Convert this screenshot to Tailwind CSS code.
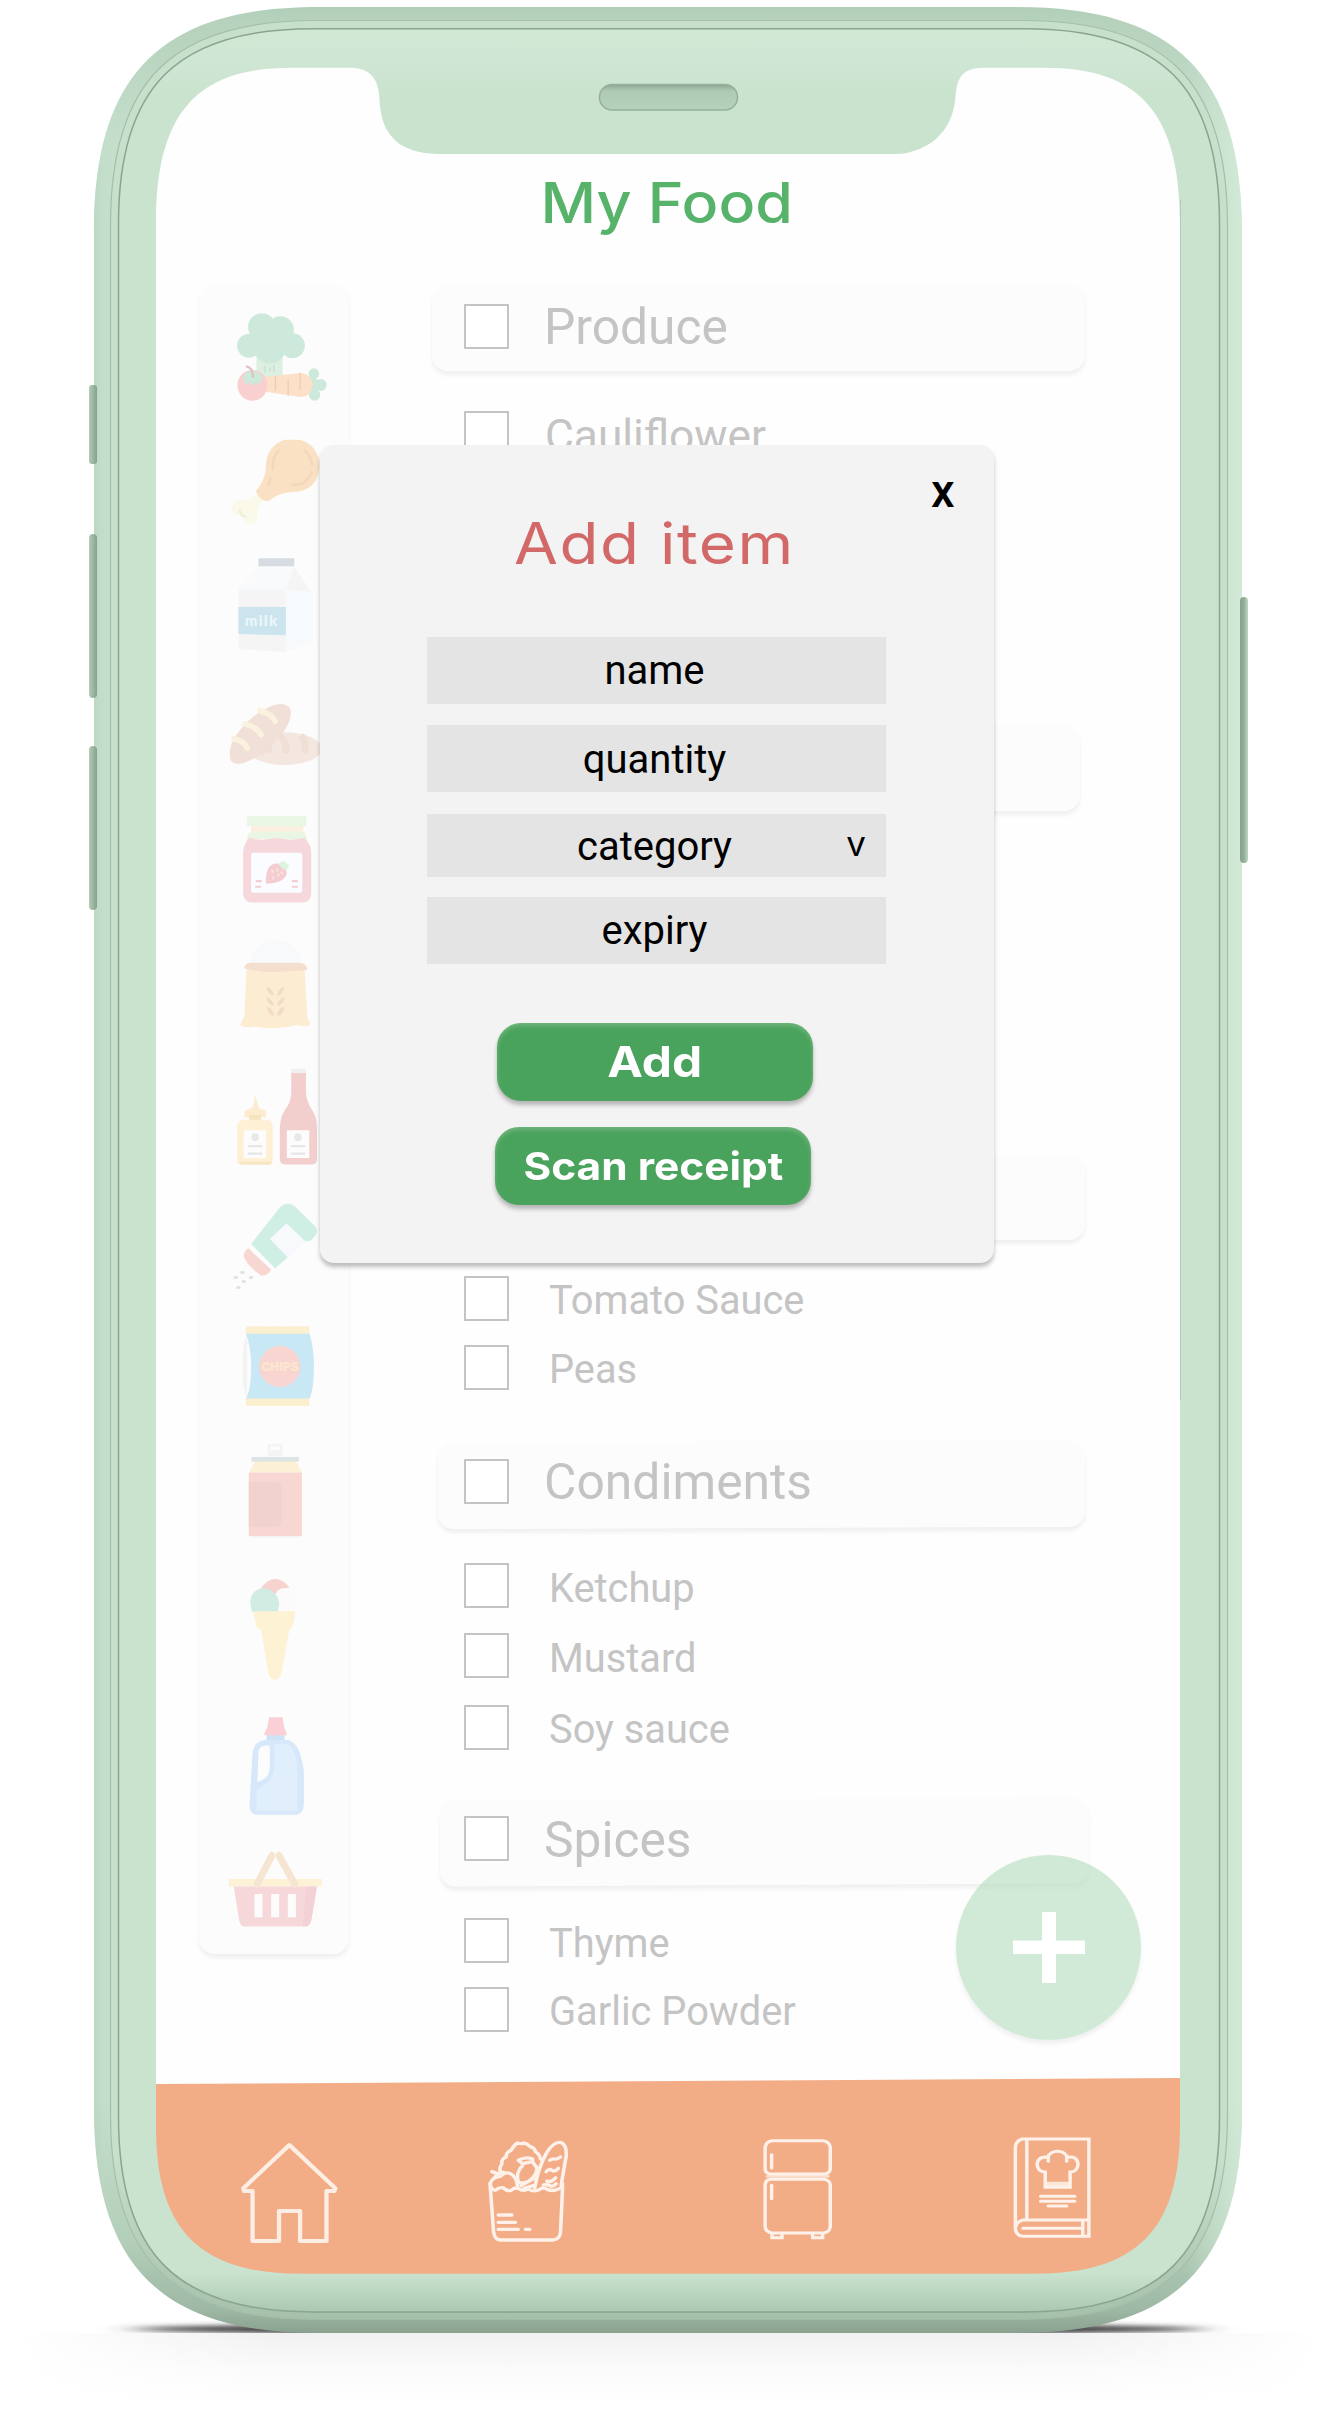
<!DOCTYPE html>
<html lang="en">
<head>
<meta charset="utf-8">
<title>My Food</title>
<script src="https://cdn.jsdelivr.net/npm/@tailwindcss/browser@4"></script>
</head>
<body class="bg-white">
<main class="relative h-[2423px] w-[1339px] overflow-hidden bg-white pt-[68px] pl-[156px] font-['Roboto',sans-serif]">

  <!-- floor shadow and side buttons -->
  <svg class="absolute inset-0" width="1339" height="2423" viewBox="0 0 1339 2423">
    <defs>
      <filter id="soft" x="-10%" y="-300%" width="120%" height="700%"><feGaussianBlur stdDeviation="18 2.5"/></filter>
      <linearGradient id="floor" x1="0" y1="0" x2="0" y2="1"><stop offset="0" stop-color="#f1f1f1"/><stop offset=".5" stop-color="#fafafa"/><stop offset="1" stop-color="#ffffff"/></linearGradient>
      <linearGradient id="fade" x1="0" y1="0" x2="1" y2="0"><stop offset="0" stop-color="#fff"/><stop offset=".2" stop-color="#fff" stop-opacity="0"/><stop offset=".8" stop-color="#fff" stop-opacity="0"/><stop offset="1" stop-color="#fff"/></linearGradient>
      <linearGradient id="keyL" x1="0" y1="0" x2="1" y2="0"><stop offset="0" stop-color="#b0ccb6"/><stop offset="1" stop-color="#86a08c"/></linearGradient>
      <linearGradient id="keyR" x1="0" y1="0" x2="1" y2="0"><stop offset="0" stop-color="#86a08c"/><stop offset=".5" stop-color="#93ad99"/><stop offset="1" stop-color="#bcd8c2"/></linearGradient>
      <clipPath id="above"><rect x="0" y="2290" width="1339" height="43"/></clipPath>
    </defs>
    <rect x="20" y="2333" width="1300" height="70" fill="url(#floor)"/>
    <rect x="20" y="2333" width="1300" height="70" fill="url(#fade)"/>
    <g clip-path="url(#above)"><ellipse cx="668" cy="2329" rx="535" ry="6" fill="#3c3c3c" filter="url(#soft)"/></g>
  </svg>

  <div class="relative flex h-[2206px] w-[1024px] flex-col bg-[#fefefe]">
    <h1 class="h-[216px] w-[640px] origin-left scale-x-[1.089] pt-[101px] pl-[353px] font-['Inter',sans-serif] text-[56px] leading-[68px] font-medium whitespace-nowrap text-[#57b26a]">My Food</h1>

    <div class="flex h-[1794px]">
      <!-- food categories -->
      <nav class="ml-[43px] flex h-[1670px] w-[150px] flex-col rounded-[16px] bg-[#fcfcfc] shadow-[0_4px_4px_rgba(0,0,0,0.06)]">
        <svg class="h-[135.7px] w-[150px] shrink-0" viewBox="28 13 449 407" preserveAspectRatio="none">
          <path d="M200 215h78v78h-78z" fill="#dcefe0"/><path d="M226 258v22M240 262v14M252 256v22" stroke="#c4e2cf" stroke-width="4" fill="none"/>
          <g fill="#cce9db"><circle cx="216" cy="142" r="41"/><circle cx="272" cy="150" r="40"/><circle cx="178" cy="198" r="36"/><circle cx="308" cy="198" r="37"/><ellipse cx="240" cy="208" rx="46" ry="43"/><circle cx="372" cy="282" r="16"/><circle cx="392" cy="316" r="18"/><circle cx="374" cy="346" r="17"/><path d="M355 290l40 15v22l-36 14z"/></g>
          <path d="M225 292L330 280Q366 282 368 316Q364 352 332 352L225 336z" fill="#fde0c8"/>
          <path d="M257 288v46M295 300v48M331 280v50" stroke="#f1cdb0" stroke-width="4" fill="none"/>
          <ellipse cx="188" cy="317" rx="45" ry="46" fill="#f9cfcf"/>
          <path d="M159 290Q186 256 218 290L209 316L198 308L188 320L178 308L166 316z" fill="#cce9db"/>
          <path d="M168 260q22 2 22 34" stroke="#e0c4c4" stroke-width="7" fill="none"/>
        </svg>
        <svg class="h-[123.3px] w-[150px] shrink-0" viewBox="28 420 449 370" preserveAspectRatio="none">
          <path d="M196 644Q220 650 216 672Q200 680 202 700Q208 728 182 732Q160 732 156 706Q126 706 127 682Q132 656 154 660Q176 664 196 644z" fill="#fbf9e9"/>
          <path d="M150 688q0 22 20 22" stroke="#f0efd8" stroke-width="7" fill="none"/>
          <path d="M284 479h44Q388 494 388 560Q384 632 310 636Q262 638 236 664Q210 664 198 634Q226 600 228 566Q226 500 284 479z" fill="#fbe1c4"/>
          <path d="M266 512q-20 24-17 56M242 592l-6 24M346 512q18 20 20 42M308 614q40 4 56-36" stroke="#f3d8bc" stroke-width="8" fill="none" stroke-linecap="round"/>
        </svg>
        <svg class="h-[136.7px] w-[150px] shrink-0" viewBox="28 790 449 410" preserveAspectRatio="none">
          <path d="M206 860h106L288 932H147z" fill="#f8fafc"/><path d="M312 860L364 938L288 932z" fill="#f5f5f5"/>
          <path d="M147 930h141v188l-141-10z" fill="#f5f5f5"/><path d="M288 930l80 8v150l-80 30z" fill="#f7fafc"/>
          <path d="M206 836h107v24H206z" fill="#d6dce1"/><path d="M146 982h142v85l-142-4z" fill="#cbe4ee"/>
          <text x="166" y="1038" font-family="Lato" font-weight="900" font-size="44" fill="#eef7fa" textLength="96">milk</text>
        </svg>
        <svg class="h-[100px] w-[150px] shrink-0" viewBox="28 1200 449 300" preserveAspectRatio="none">
          <ellipse cx="284" cy="1406" rx="112" ry="49" fill="#f4e7df"/>
          <path d="M270 1366q24 22 16 54M334 1366q18 20 10 52M210 1420l26-24v22" stroke="#efdfd5" stroke-width="20" fill="none"/>
          <path d="M122 1440Q108 1380 190 1310Q270 1250 300 1284Q316 1330 240 1400Q150 1476 122 1440z" fill="#f0e0d7"/>
          <path d="M132 1376q30 6 40 28M166 1332q34 8 48 32M210 1292q34 8 46 32" stroke="#faf2df" stroke-width="17" fill="none" stroke-linecap="round"/>
        </svg>
        <svg class="h-[140px] w-[150px] shrink-0" viewBox="28 28 449 392" preserveAspectRatio="none">
          <path d="M184 154h156v24H184z" fill="#faf0e2"/><path d="M172 129h177v28H172zM178 174h166l8 20H170z" fill="#e9f6e3"/>
          <path d="M178 190q40 10 82 0q44 10 84 0Q364 210 364 230V346Q362 371 340 371H184Q162 370 160 346V230Q162 206 178 190z" fill="#f6d8dc"/>
          <rect x="184" y="232" width="153" height="112" rx="6" fill="#fafcff"/>
          <path d="M228 318Q226 262 262 262Q292 270 290 292Q280 318 228 318z" fill="#f4cdd2"/><path d="M266 262l16-8 16 14-8 12-14-4z" fill="#def3dc"/>
          <path d="M248 280v8M262 276v8M250 298v8M266 290v8M276 284v8" stroke="#fbe6dc" stroke-width="6"/>
          <path d="M198 311h18M196 327h18M306 311h18M306 327h18" stroke="#f4cdd2" stroke-width="6"/>
        </svg>
        <svg class="h-[128.6px] w-[150px] shrink-0" viewBox="28 420 449 360" preserveAspectRatio="none">
          <path d="M180 542Q196 476 258 476Q320 478 338 542z" fill="#f7f9fb"/>
          <path d="M170 556H344L352 692L362 712Q350 722 322 714Q260 730 196 718Q170 724 151 714L164 688z" fill="#fcecd2"/>
          <path d="M164 556Q164 540 186 540H330Q352 542 352 560Q300 564 256 566Q210 566 164 556z" fill="#f4dfcf"/>
          <path d="M230 606q20 8 22 26q-18-2-22-26M230 636q20 6 22 24q-18-2-22-24M230 662q20 6 22 26q-18-2-22-26M284 606q-20 8-22 26q18-2 22-26M284 636q-20 6-22 24q18-2 22-24M284 662q-20 6-22 26q18-2 22-26" fill="#f1dac6"/>
        </svg>
        <svg class="h-[135.7px] w-[150px] shrink-0" viewBox="28 780 449 380" preserveAspectRatio="none">
          <path d="M187 948q8-16 8-40q10 30 12 40l22 8v18H164v-18z" fill="#fcecd0"/><path d="M178 968h36v14h-36z" fill="#f6e4c0"/>
          <path d="M158 981h76q15 4 15 22V1094q0 12-14 12H158q-16 0-16-12V1003q0-18 16-22z" fill="#fdf0d4"/><path d="M146 1098h102l-6 9H152z" fill="#f9e6c4"/>
          <path d="M304 838h44v14h-44z" fill="#f0f0f0"/>
          <path d="M304 850h44v56Q350 930 368 956Q382 976 381 1010V1090q0 16-14 16H284q-14 0-14-16V1010Q270 976 284 956Q304 930 304 906z" fill="#f2cfcd"/>
          <path d="M162 1010h67v78h-67zM291 1010h67v78h-67z" fill="#fcfcfc"/>
          <circle cx="196" cy="1030" r="11" fill="#e8e8e8"/><circle cx="324" cy="1030" r="11" fill="#e8e8e8"/>
          <path d="M174 1055h43M174 1076h43M303 1055h43M303 1076h43" stroke="#e6e6e6" stroke-width="6"/>
        </svg>
        <svg class="h-[121.4px] w-[150px] shrink-0" viewBox="28 1160 449 340" preserveAspectRatio="none">
          <path d="M184 1328L272 1224Q292 1208 314 1222L376 1278Q386 1292 376 1304Q362 1324 348 1320L298 1362L256 1396z" fill="#cfeee4"/>
          <path d="M290 1270L348 1322L294 1366L240 1314z" fill="#f7f9fc"/>
          <path d="M176 1340L244 1400Q234 1418 214 1416Q170 1388 162 1362Q162 1348 176 1340z" fill="#f8d7d3"/>
          <path d="M132 1422h12M152 1408h12M178 1422h12M156 1433h12M140 1450h12" stroke="#dcdfe3" stroke-width="7"/>
        </svg>
        <svg class="h-[120px] w-[150px] shrink-0" viewBox="28 -10 449 285" preserveAspectRatio="none">
          <path d="M172 58Q158 80 158 134Q158 190 172 212z" fill="#f3f3f4"/>
          <path d="M168 56H358Q372 90 372 134Q372 190 358 214H168Q184 190 184 134Q184 90 168 56z" fill="#c9e8f5"/>
          <path d="M168 58V42l6-3 6 3 6-3 6 3 6-3 6 3 6-3 6 3 6-3 6 3 6-3 6 3 6-3 6 3 6-3 6 3 6-3 6 3 6-3 6 3 6-3 6 3 6-3 6 3 6-3 6 3 6-3 6 3 6-3 6 3 6-3 4 3V58zM168 212V230H358V212z" fill="#fcefd0"/>
          <ellipse cx="270" cy="136" rx="62" ry="49" fill="#f8d5d0"/>
          <text x="214" y="146" font-family="Inter" font-weight="900" font-size="27" fill="#fce6cf" textLength="112" lengthAdjust="spacingAndGlyphs">CHIPS</text>
        </svg>
        <svg class="h-[136.8px] w-[150px] shrink-0" viewBox="28 275 449 325" preserveAspectRatio="none">
          <path d="M234 320h44v30h-44z" fill="#f4f4f4"/><path d="M242 326h28v9h-28z" fill="#fcfcfc"/>
          <path d="M196 360H318L336 388H178z" fill="#fcf0d6"/><path d="M185 351h142v11H185z" fill="#dde4e4"/>
          <path d="M177 388H336V539H177z" fill="#f8d7d2"/><path d="M177 410h82q16 2 16 14v78q0 14-16 16h-82z" fill="#f2d2cd"/>
          <path d="M182 539h150v4H182z" fill="#f3f5f5"/>
        </svg>
        <svg class="h-[134.7px] w-[150px] shrink-0" viewBox="28 600 449 320" preserveAspectRatio="none">
          <path d="M212 664Q230 642 256 640Q284 642 299 662Q262 660 258 676z" fill="#f6d3cf"/>
          <path d="M262 672Q290 660 318 668Q326 690 312 718H262z" fill="#fcfafa"/>
          <path d="M188 720Q174 690 190 674Q210 658 236 664Q264 674 268 698L264 720z" fill="#d0ece3"/>
          <path d="M190 717H316Q314 744 306 756L298 762L274 868Q266 880 254 880Q240 878 236 866L214 762Q200 758 198 748z" fill="#fef2d5"/>
        </svg>
        <svg class="h-[138.9px] w-[150px] shrink-0" viewBox="28 920 449 330" preserveAspectRatio="none">
          <path d="M230 1008h54v16h-54z" fill="#cfe3f6"/>
          <path d="M238 968h40l6 28q6 4 7 15H223q1-11 8-15z" fill="#fad0d6"/>
          <path fill-rule="evenodd" d="M226 1022H296Q326 1030 336 1072Q342 1084 342 1110V1176Q340 1198 318 1200H200Q180 1198 179 1178L188 1056Q192 1024 226 1022zM206 1050L203 1122Q240 1114 240 1086V1036Q210 1032 206 1050z" fill="#d6e8fa"/>
          <path d="M254 1032H294Q312 1038 322 1078V1190H200V1142Q254 1118 254 1084z" fill="#e1eefb"/>
        </svg>
        <svg class="h-[117.8px] w-[150px] shrink-0" viewBox="28 1250 449 280" preserveAspectRatio="none">
          <path d="M117 1352H396v18H117z" fill="#fef2d6"/>
          <path d="M132 1370H381L364 1450Q360 1465 348 1465H164Q152 1465 148 1450z" fill="#f6d8db"/><path d="M347 1370h34l-17 80q-4 15-26 15q6-30 9-95z" fill="#f3d2d6"/>
          <path d="M202 1364L246 1297M314 1364L268 1297" stroke="#f7e5d4" stroke-width="20" stroke-linecap="round"/>
          <path d="M194 1388h24v55h-24zM244 1388h24v55h-24zM294 1388h24v55h-24z" fill="#fcfcfc"/>
        </svg>
      </nav>

      <!-- inventory list -->
      <div class="ml-[83px] flex flex-1 flex-col text-[39.8px] leading-[45px] whitespace-nowrap text-[#c4c4c4]">
        <div class="flex h-[87px] w-[653px] shrink-0 gap-[35px] rounded-[16px] bg-[#fcfcfc] pt-[20px] pl-[32px] text-[49.7px] shadow-[0_4px_4px_rgba(0,0,0,0.06)]">
          <span class="size-[45px] border-2 border-[#c4c4c4] bg-white"></span><span class="pt-px">Produce</span>
        </div>
        <div class="mt-[40px] flex h-[45px] shrink-0 gap-[36px] pl-[32px] text-[44.3px]"><span class="size-[45px] border-2 border-[#c4c4c4] bg-white"></span><span class="pt-[3px]">Cauliflower</span></div>
        <div class="mt-[269px] h-[86px] w-[648px] shrink-0 rounded-[16px] bg-[#fcfcfc] shadow-[0_4px_4px_rgba(0,0,0,0.06)]"></div>
        <div class="mt-[343px] h-[86px] w-[653px] shrink-0 rounded-[16px] bg-[#fcfcfc] shadow-[0_4px_4px_rgba(0,0,0,0.06)]"></div>
        <div class="mt-[36px] flex h-[45px] shrink-0 gap-[40px] pl-[32px]"><span class="size-[45px] border-2 border-[#c4c4c4] bg-white"></span><span class="pt-[2px]">Tomato Sauce</span></div>
        <div class="mt-[24px] flex h-[45px] shrink-0 gap-[40px] pl-[32px]"><span class="size-[45px] border-2 border-[#c4c4c4] bg-white"></span><span class="pt-[2px]">Peas</span></div>
        <div class="relative mt-[51px] ml-[6px] flex h-[87px] w-[647px] shrink-0 gap-[35px] pt-[18px] pl-[26px] text-[49.8px]">
          <div class="absolute inset-0 -skew-y-[0.2deg] rounded-[16px] bg-[#fcfcfc] shadow-[0_4px_4px_rgba(0,0,0,0.06)]"></div>
          <span class="relative size-[45px] border-2 border-[#c4c4c4] bg-white"></span><span class="relative pt-px">Condiments</span>
        </div>
        <div class="mt-[35px] flex h-[45px] shrink-0 gap-[40px] pl-[32px]"><span class="size-[45px] border-2 border-[#c4c4c4] bg-white"></span><span class="pt-[3px]">Ketchup</span></div>
        <div class="mt-[25px] flex h-[45px] shrink-0 gap-[40px] pl-[32px]"><span class="size-[45px] border-2 border-[#c4c4c4] bg-white"></span><span class="pt-[3px]">Mustard</span></div>
        <div class="mt-[27px] flex h-[45px] shrink-0 gap-[40px] pl-[32px]"><span class="size-[45px] border-2 border-[#c4c4c4] bg-white"></span><span class="pt-[2px]">Soy sauce</span></div>
        <div class="relative mt-[49px] ml-[8px] flex h-[86px] w-[649px] shrink-0 gap-[35px] pt-[17px] pl-[24px] text-[49.7px]">
          <div class="absolute inset-0 -skew-y-[0.28deg] rounded-[16px] bg-[#fcfcfc] shadow-[0_4px_4px_rgba(0,0,0,0.06)]"></div>
          <span class="relative size-[45px] border-2 border-[#c4c4c4] bg-white"></span><span class="relative pt-[2px]">Spices</span>
        </div>
        <div class="mt-[33px] flex h-[45px] shrink-0 gap-[40px] pl-[32px]"><span class="size-[45px] border-2 border-[#c4c4c4] bg-white"></span><span class="pt-[3px]">Thyme</span></div>
        <div class="mt-[24px] flex h-[45px] shrink-0 gap-[40px] pl-[32px]"><span class="size-[45px] border-2 border-[#c4c4c4] bg-white"></span><span class="pt-[2px]">Garlic Powder</span></div>
      </div>
    </div>

    <!-- bottom navigation -->
    <nav class="flex h-[196px] items-start bg-[#f3ad86] pt-[56px] [clip-path:polygon(0_6px,100%_0,100%_100%,0_100%)]">
      <svg class="mt-[6px] ml-[83px] h-[106px] w-[100px]" viewBox="276 269 280 318" preserveAspectRatio="none" fill="none" stroke="#fdeee5" stroke-width="12" stroke-linejoin="round">
        <path d="M417 284L546 414L543 422H521V572H447V482H388V572H314V422H290L288 414z"/>
      </svg>
      <svg class="mt-[3px] ml-[146px] h-[106px] w-[88px]" viewBox="969 260 246 318" preserveAspectRatio="none" fill="none" stroke="#fdf1ea" stroke-width="10" stroke-linejoin="round" stroke-linecap="round">
        <path d="M983 400L993 545Q996 568 1012 569H1160Q1178 566 1180 546L1186 410"/>
        <path d="M984 400Q984 416 998 420Q1008 410 1020 412Q1030 424 1042 420Q1052 410 1062 414Q1076 424 1090 416Q1104 426 1120 418Q1132 408 1144 418Q1160 424 1174 416Q1186 412 1186 400"/>
        <path d="M984 398Q990 380 1012 378Q1030 358 1048 376Q1060 390 1060 414M988 364L1004 370L996 382M1004 372L1020 366"/>
        <path d="M1012 366Q1008 350 1016 342Q1014 326 1028 320Q1028 304 1042 300Q1050 284 1060 278Q1070 282 1078 278Q1088 280 1094 288Q1108 292 1110 304Q1122 312 1124 326"/>
        <path d="M1074 346Q1054 366 1062 396Q1090 404 1108 374Q1120 352 1108 344L1102 334L1074 340L1062 330Q1084 318 1102 326V336M1070 406L1106 384M1078 414L1104 406"/>
        <path d="M1108 412Q1118 350 1142 306Q1160 274 1180 276Q1198 282 1196 316L1182 404M1132 404q10-4 18 2t18-6M1142 392q8 4 16-2t8-8M1140 364q8-10 16-4t18-6M1150 330q8-6 14-4t16-6"/>
        <path d="M1006 494H1044M1006 516H1054M1006 537H1062M1082 537H1094"/>
      </svg>
      <svg class="mt-[2px] ml-[186px] h-[106px] w-[77px]" viewBox="150 258 201 318" preserveAspectRatio="none" fill="none" stroke="#fdf1ea" stroke-width="9" stroke-linecap="round">
        <path d="M184 272H318Q335 276 336 292V358Q334 370 322 372H180Q167 370 166 358V292Q167 276 184 272z"/>
        <path d="M172 379H330" stroke-opacity=".7"/>
        <path d="M180 388H322Q335 392 336 404V530Q334 548 318 549H184Q167 546 166 530V404Q167 390 180 388z"/>
        <path d="M183 314V354M183 406V446M184 552V563H210V552M290 552V563H316V552"/>
      </svg>
      <svg class="mt-px ml-[174px] h-[106px] w-[85px]" viewBox="808 255 222 318" preserveAspectRatio="none" fill="none" stroke="#fdf1ea" stroke-width="9" stroke-linecap="round">
        <path d="M1014 267H840Q823 272 822 292V538Q826 558 842 559H1014zM852 267V508M1014 510H842Q826 514 823 530M842 535H994M998 514V555" />
        <path d="M900 412V366Q878 364 879 340Q884 318 906 322Q914 304 932 304Q950 304 958 322Q982 316 986 342Q984 366 965 366V412zM908 324V334M956 324V334" />
        <path d="M902 404H964" stroke-width="18" stroke-linecap="butt" stroke-opacity=".85"/>
        <path d="M888 439H977M888 454H977M908 468H956"/>
      </svg>
    </nav>

    <!-- floating add button -->
    <button class="absolute top-[1787px] left-[800px] flex size-[185px] items-center justify-center rounded-full bg-[#b3dabc]/60 shadow-[0_4px_4px_rgba(0,0,0,0.06)]">
      <svg width="72" height="71" viewBox="0 0 72 71"><path d="M29 0h14v28.500h29v13.500H43v29H29V42H0V28.500h29z" fill="#fff"/></svg>
    </button>

    <!-- add item dialog -->
    <section class="absolute top-[377px] left-[164px] flex h-[818px] w-[674px] flex-col rounded-[14px] bg-[#f3f3f3] text-black shadow-[0_4px_4px_rgba(0,0,0,0.25)]">
      <button class="absolute top-[16px] left-[611px] text-[47px] leading-[60px] font-medium">x</button>
      <h2 class="ml-[194px] w-[300px] origin-left scale-x-[1.117] pt-[64px] font-['Inter',sans-serif] text-[57px] leading-[70px] tracking-[1.4px] whitespace-nowrap text-[#d26868]">Add item</h2>
      <div class="mt-[58px] ml-[107px] flex w-[459px] flex-col text-center text-[40px]">
        <div class="h-[67px] bg-[#e4e4e4] pr-[4px] leading-[67px]">name</div>
        <div class="mt-[21px] h-[67px] bg-[#e4e4e4] pr-[4px] leading-[69px]">quantity</div>
        <div class="relative mt-[22px] h-[63px] bg-[#e4e4e4] pr-[4px] leading-[66px]">category<span class="absolute top-0 right-[20px] font-['Inter',sans-serif] text-[35px] leading-[58px]">v</span></div>
        <div class="mt-[20px] h-[67px] bg-[#e4e4e4] pr-[4px] leading-[67px]">expiry</div>
      </div>
      <button class="mt-[59px] ml-[177px] h-[78px] w-[316px] rounded-[24px] bg-[#4aa35c] font-['Inter',sans-serif] text-[42px] leading-[78px] font-bold text-white shadow-[0_4px_4px_rgba(0,0,0,0.25),inset_0_3px_4px_rgba(255,255,255,0.2)]"><span class="inline-block scale-x-[1.14]">Add</span></button>
      <button class="mt-[26px] ml-[175px] h-[78px] w-[316px] rounded-[24px] bg-[#4aa35c] font-['Inter',sans-serif] text-[38px] leading-[75px] font-bold whitespace-nowrap text-white shadow-[0_4px_4px_rgba(0,0,0,0.25),inset_0_3px_4px_rgba(255,255,255,0.2)]"><span class="inline-block scale-x-[1.117]">Scan receipt</span></button>
    </section>
  </div>

  <!-- device frame, with the screen cut out -->
  <svg class="pointer-events-none absolute inset-0" width="1339" height="2423" viewBox="0 0 1339 2423">
    <defs>
      <linearGradient id="rimV" gradientUnits="userSpaceOnUse" x1="0" y1="7" x2="0" y2="2333">
        <stop offset="0" stop-color="#b0ceb8"/><stop offset=".006" stop-color="#b6d2bd"/><stop offset=".06" stop-color="#c4dfcb"/><stop offset=".9" stop-color="#c4dfcb"/><stop offset=".96" stop-color="#b3ceb9"/><stop offset=".99" stop-color="#9db8a4"/><stop offset="1" stop-color="#8aa18f"/>
      </linearGradient>
      <linearGradient id="rimH" gradientUnits="userSpaceOnUse" x1="94" y1="0" x2="1242" y2="0">
        <stop offset="0" stop-color="#b4d0bb" stop-opacity=".5"/><stop offset=".014" stop-color="#c4dfcb" stop-opacity="0"/><stop offset=".95" stop-color="#d0e7d5" stop-opacity="0"/><stop offset="1" stop-color="#d4ebd9" stop-opacity=".8"/>
      </linearGradient>
      <linearGradient id="face" gradientUnits="userSpaceOnUse" x1="0" y1="28" x2="0" y2="2312">
        <stop offset="0" stop-color="#d1e8d5"/><stop offset=".015" stop-color="#cfe6d4"/><stop offset=".03" stop-color="#c9e3ce"/><stop offset=".983" stop-color="#c9e3ce"/><stop offset="1" stop-color="#abc8b1"/>
      </linearGradient>
      <linearGradient id="ring" gradientUnits="userSpaceOnUse" x1="0" y1="20" x2="0" y2="2319">
        <stop offset="0" stop-color="#c7e0cc"/><stop offset=".93" stop-color="#c7e0cc"/><stop offset="1" stop-color="#a5c0ab"/>
      </linearGradient>
      <linearGradient id="slot" x1="0" y1="0" x2="0" y2="1"><stop offset="0" stop-color="#8ba692"/><stop offset=".25" stop-color="#aecab5"/><stop offset="1" stop-color="#b5d2bc"/></linearGradient>
    </defs>
    <path fill="url(#rimV)" fill-rule="evenodd" d="M319 7H1017C1175 7 1242 74 1242 232V2108C1242 2266 1175 2333 1017 2333H319C161 2333 94 2266 94 2108V232C94 74 161 7 319 7ZM313.500 28.700C176.500 28.700 118.500 86.700 118.500 223.700V2117C118.500 2254 176.500 2312 313.500 2312H1024.500C1161.500 2312 1219.500 2254 1219.500 2117V223.700C1219.500 86.700 1161.500 28.700 1024.500 28.700Z"/>
    <path fill="url(#rimH)" fill-rule="evenodd" d="M319 7H1017C1175 7 1242 74 1242 232V2108C1242 2266 1175 2333 1017 2333H319C161 2333 94 2266 94 2108V232C94 74 161 7 319 7ZM313.500 28.700C176.500 28.700 118.500 86.700 118.500 223.700V2117C118.500 2254 176.500 2312 313.500 2312H1024.500C1161.500 2312 1219.500 2254 1219.500 2117V223.700C1219.500 86.700 1161.500 28.700 1024.500 28.700Z"/>
    <path fill="none" stroke="url(#ring)" stroke-width="8" d="M314 24.600H1023.500C1164 24.600 1223.500 84 1223.500 224.600V2115.500C1223.500 2256 1164 2315.500 1023.500 2315.500H314C174 2315.500 114.200 2256 114.200 2115.500V224.600C114.200 84 174 24.600 314 24.600Z"/>
    <path fill="none" stroke="#a3bfaa" stroke-width="1.200" d="M315 20.500H1022.500C1166.500 20.500 1227.500 81.500 1227.500 225.500V2114C1227.500 2258 1166.500 2319 1022.500 2319H315C171 2319 110.500 2258 110.500 2114V225.500C110.500 81.500 171 20.500 315 20.500Z"/>
    <path fill="url(#face)" fill-rule="evenodd" d="M313.500 28.700H1024.500C1161.500 28.700 1219.500 86.700 1219.500 223.700V2117C1219.500 2254 1161.500 2312 1024.500 2312H313.500C176.500 2312 118.500 2254 118.500 2117V223.700C118.500 86.700 176.500 28.700 313.500 28.700ZM291 67.700C196 67.700 156 114 156 223V2127C156 2230 200 2273.700 301 2273.700H1035C1136 2273.700 1180 2230 1180 2127V223C1180 114 1140 67.700 1045 67.700H982C972 67.700 964 71 960 78C956 85 956 92 955 102C953 115 948 128 936 139C928 146 912 154 896 154H440C422 154 406 150 396 141C386 132 382 122 380 106C379 97 380 92 376 82C372 73 364 67.700 350 67.700Z"/>
    <path fill="none" stroke="#89a48f" stroke-width="1.500" d="M313.500 28.700H1024.500C1161.500 28.700 1219.500 86.700 1219.500 223.700V2117C1219.500 2254 1161.500 2312 1024.500 2312H313.500C176.500 2312 118.500 2254 118.500 2117V223.700C118.500 86.700 176.500 28.700 313.500 28.700Z"/>
    <path stroke="#b8c8bc" stroke-width="1" d="M1180.500 200V1400"/>
    <rect x="599.500" y="84.500" width="138" height="25.500" rx="12.500" fill="url(#slot)" stroke="#95b09c" stroke-width="1.500"/>
    <g fill="url(#keyL)"><rect x="89" y="385" width="8" height="79" rx="3"/><rect x="89" y="534" width="8" height="164" rx="4"/><rect x="89" y="746" width="8" height="164" rx="4"/></g>
    <rect x="1240" y="597" width="8" height="266" rx="4" fill="url(#keyR)"/>
  </svg>
</main>
</body>
</html>
